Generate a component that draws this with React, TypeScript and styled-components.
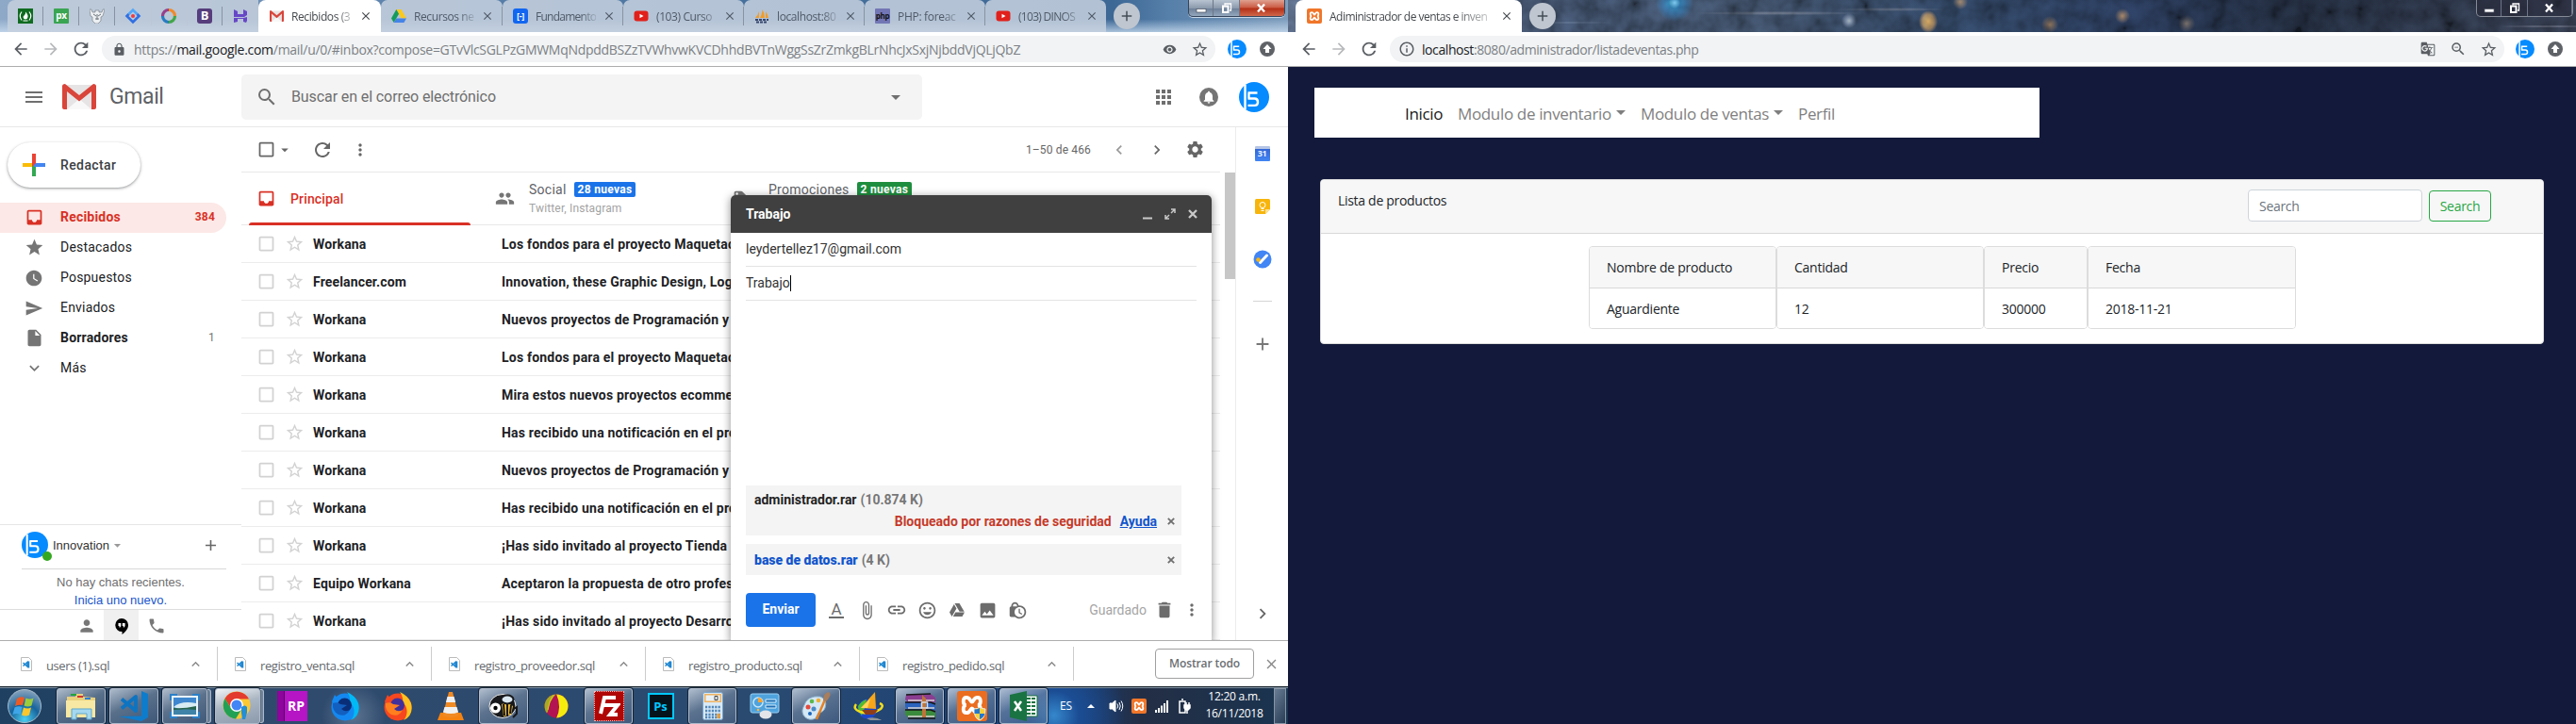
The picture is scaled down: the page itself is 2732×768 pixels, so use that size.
import React from "react";
import styled, { createGlobalStyle, css } from "styled-components";
import {
  MdArrowBack, MdArrowForward, MdRefresh, MdLock, MdInfoOutline, MdStarBorder, MdStar, MdVisibility,
  MdMenu, MdSearch, MdArrowDropDown, MdApps, MdInbox, MdWatchLater, MdSend, MdInsertDriveFile,
  MdExpandMore, MdExpandLess, MdChevronLeft, MdChevronRight, MdSettings, MdMoreVert, MdPeople, MdLocalOffer,
  MdCheckBoxOutlineBlank, MdAttachFile, MdInsertLink, MdInsertEmoticon, MdInsertPhoto, MdDelete,
  MdLockClock, MdPerson, MdPhone, MdAdd, MdClose, MdNotifications, MdGTranslate, MdZoomOut,
} from "react-icons/md";
import { FaGoogleDrive } from "react-icons/fa";

const ui = '"Open Sans", "Noto Sans", sans-serif';
const roboto = 'Roboto, "Liberation Sans", sans-serif';

const Global = createGlobalStyle`
  * { box-sizing: border-box; }
  body { margin: 0; background: #12193a; overflow: hidden; }
  svg { display: block; flex: none; }
`;

const Desktop = styled.div`
  display: flex;
  width: 2732px;
  height: 768px;
  overflow: hidden;
  font-family: ${roboto};
`;
const Monitor = styled.div`
  width: 1366px;
  height: 768px;
  display: flex;
  flex-direction: column;
  flex: none;
  overflow: hidden;
`;
const Slot = styled.div<{ $w: number }>`
  width: ${(p) => p.$w}px;
  flex: none;
  display: flex;
  align-items: center;
  justify-content: center;
`;
const Gap = styled.div<{ $w?: number }>`
  ${(p) => (p.$w === undefined ? "flex: 1;" : `width: ${p.$w}px; flex: none;`)}
`;

/* ---------- browser chrome ---------- */
const Strip = styled.div<{ $stars?: boolean }>`
  position: relative;
  z-index: 0;
  height: 34px;
  flex: none;
  display: flex;
  align-items: flex-start;
  padding-left: 8px;
  ${(p) =>
    p.$stars
      ? css`
          background:
            radial-gradient(circle at 410px 3px, #6fc0ef 0, #2c6c9f 6px, transparent 20px),
            radial-gradient(ellipse 10px 12px at 679px 23px, #d3a05c 0, #8c7255 60%, transparent 100%),
            radial-gradient(circle at 713px 2px, #8a7460 0, transparent 8px),
            radial-gradient(circle at 808px 26px, #7b644f 0, transparent 9px),
            radial-gradient(circle at 885px 17px, #846a52 0, transparent 8px),
            radial-gradient(circle at 953px 25px, #5d5652 0, transparent 9px),
            radial-gradient(circle at 595px 22px, #7c889a 0, transparent 8px),
            radial-gradient(ellipse at 300px 24px, #4d5b70 0, transparent 50px),
            radial-gradient(ellipse at 520px 14px, #5c6473 0, transparent 90px),
            radial-gradient(ellipse at 640px 10px, #4f5868 0, transparent 60px),
            radial-gradient(ellipse at 1340px 28px, #5c5f6e 0, transparent 60px),
            linear-gradient(90deg, #4c5a71 0, #36445a 300px, #344256 500px, #283951 700px, #22304a 900px, #1d2636 1050px, #2c3342 1366px);
        `
      : css`
          background:
            linear-gradient(180deg, transparent 60%, rgba(206, 224, 242, 0.75) 100%),
            linear-gradient(90deg, #8ea9c8 0, #5f84ad 400px, #46709c 800px, #3d6795 1180px, #567fa9 1240px, #7e9dbd 1366px);
        `}
`;
const NebulaGrain = styled.svg`
  position: absolute;
  inset: 0;
  z-index: -1;
  opacity: 0.4;
  mix-blend-mode: overlay;
`;
const PinnedTab = styled.div<{ $last?: boolean; $first?: boolean }>`
  width: 38px;
  height: 34px;
  flex: none;
  display: flex;
  align-items: center;
  justify-content: center;
  background: rgba(198, 209, 222, 0.84);
  border-radius: ${(p) => (p.$first ? "8px 0 0 0" : "0")};
  &::after {
    content: "";
    width: 1px;
    height: 20px;
    margin: 0 -11px 0 10px;
    background: ${(p) => (p.$last ? "transparent" : "#8793a3")};
  }
`;
const Tab = styled.div<{ $w: number; $active?: boolean; $sep?: boolean; $left?: number }>`
  width: ${(p) => p.$w}px;
  height: 34px;
  flex: none;
  display: flex;
  align-items: center;
  padding-left: ${(p) => p.$left ?? 12}px;
  border-radius: ${(p) => (p.$active ? "8px 8px 0 0" : "7px 7px 0 0")};
  background: ${(p) => (p.$active ? "#fff" : "rgba(198,209,222,0.86)")};
  color: ${(p) => (p.$active ? "#45494d" : "#4f5a68")};
  &::after {
    content: "";
    width: 1px;
    height: 20px;
    margin-left: auto;
    background: ${(p) => (p.$sep ? "#8793a3" : "transparent")};
  }
`;
const TabTitle = styled.div<{ $w: number; $ls?: number }>`
  width: ${(p) => p.$w}px;
  flex: none;
  margin-left: 8px;
  font: 12px ${ui};
  letter-spacing: ${(p) => p.$ls ?? -0.3}px;
  white-space: nowrap;
  mask-image: linear-gradient(90deg, #000 75%, rgba(0, 0, 0, 0.2) 100%);
`;
const NewTab = styled.div`
  width: 28px;
  height: 28px;
  margin: 3px 0 0 8px;
  border-radius: 50%;
  background: #bfc6cf;
  color: #454d57;
  display: flex;
  align-items: center;
  justify-content: center;
`;
const Controls = styled.div<{ $dark?: boolean }>`
  display: flex;
  height: 18px;
  width: 103px;
  border: 1px solid ${(p) => (p.$dark ? "#858a96" : "#35465c")};
  border-top: 0;
  border-radius: 0 0 5px 5px;
  overflow: hidden;
  box-shadow: ${(p) => (p.$dark ? "none" : "0 1px 0 #c6d6e6")};
  background: ${(p) => (p.$dark ? "rgba(40,42,58,.6)" : "linear-gradient(#b9c4d1,#8b9aad 50%,#6c7f97 52%,#93a7bd)")};
`;
const Control = styled.div<{ $w: number; $close?: boolean }>`
  width: ${(p) => p.$w}px;
  display: flex;
  align-items: center;
  justify-content: center;
  border-right: 1px solid #6c7688;
  ${(p) => p.$close && "border-right: 0; background: linear-gradient(#dfa08f,#ca5a43 48%,#b32f16 52%,#d0674a);"}
`;
const Bar = styled.div`
  height: 37px;
  flex: none;
  display: flex;
  align-items: center;
  background: #fff;
  border-bottom: 1px solid #adadad;
  color: #5a5e63;
`;
const Omnibox = styled.div<{ $w: number }>`
  width: ${(p) => p.$w}px;
  height: 28px;
  border-radius: 14px;
  background: #f1f3f4;
  display: flex;
  align-items: center;
  flex: none;
`;
const Url = styled.div<{ $ls: number }>`
  font: 14px ${ui};
  letter-spacing: ${(p) => p.$ls}px;
  color: #7c8085;
  white-space: nowrap;
  b { font-weight: 400; color: #202124; }
`;
const UpdateDot = styled.div`
  width: 16px;
  height: 16px;
  border-radius: 50%;
  background: #5f6368;
  display: flex;
  align-items: center;
  justify-content: center;
`;

const Cross = ({ size, color }: { size: number; color: string }) => (
  <svg width={size} height={size} viewBox="0 0 10 10"><path d="M1 1l8 8M9 1L1 9" stroke={color} strokeWidth="2.300" /></svg>
);
const Avatar = ({ size }: { size: number }) => (
  <svg width={size} height={size} viewBox="0 0 32 32">
    <circle cx="16" cy="16" r="16" fill="#068bff" />
    <path d="M6.500 3v26" stroke="#fff" strokeWidth="2.400" />
    <path d="M9.500 11.500h10M9.500 17.500h7q3.500 0 3.500 3.700t-3.500 3.700h-7M10.500 11.500v6" stroke="#fff" strokeWidth="2.400" fill="none" />
  </svg>
);
const WinControls = ({ dark }: { dark?: boolean }) => (
  <Controls $dark={dark}>
    <Control $w={27}>
      <svg width="12" height="14"><rect x="1" y="7.500" width="10" height="3.500" fill="#fff" stroke="#4a5260" strokeWidth=".7" /></svg>
    </Control>
    <Control $w={28}>
      <svg width="12" height="12"><path d="M4 2.500V1h6.500v7H9" fill="none" stroke="#fff" strokeWidth="1.300" /><path d="M2 3.500h5.500v6.500H2z" fill="none" stroke="#fff" strokeWidth="2" /></svg>
    </Control>
    <Control $w={48} $close={!dark}>
      <svg width="12" height="12"><path d="M2 1.500l7 8M9 1.500l-7 8" stroke="#fff" strokeWidth="2.300" /></svg>
    </Control>
  </Controls>
);

/* ---------- favicons and logos ---------- */
const GlyphTile = styled.div<{ $bg: string; $fg: string; $fs: number; $r?: number }>`
  width: 16px;
  height: 16px;
  flex: none;
  border-radius: ${(p) => p.$r ?? 1}px;
  background: ${(p) => p.$bg};
  color: ${(p) => p.$fg};
  font: 700 ${(p) => p.$fs}px/15px ${ui};
  letter-spacing: -0.3px;
  text-align: center;
`;
const GmailMark = ({ w, h }: { w: number; h: number }) => (
  <svg width={w} height={h} viewBox="0 0 36 27" preserveAspectRatio="none">
    <rect x="1" y="1" width="34" height="26" rx="2" fill="#e6e4e4" />
    <path d="M5 27L18 16l13 11z" fill="#fff" opacity=".75" />
    <path d="M0 2.500Q0 0 3 0l15 12L33 0q3 0 3 2.500V25q0 2-2 2h-3V8L18 18.500 5 8v19H2q-2 0-2-2z" fill="#d9453a" />
  </svg>
);
const Drive = () => (
  <svg width="16" height="16" viewBox="0 0 16 16">
    <path d="M5.300 1h5.300L16 10.500h-5.300z" fill="#fbc91b" /><path d="M5.300 1L8 5.700 2.700 15 0 10.500z" fill="#159b5b" /><path d="M5.400 10.500H16L13.400 15H2.700z" fill="#4483e8" />
  </svg>
);
const YouTube = () => (
  <svg width="16" height="16" viewBox="0 0 16 16"><rect x="0.500" y="2.500" width="15" height="11" rx="3" fill="#e1201b" /><path d="M6.500 5.700v4.600L10.500 8z" fill="#fff" /></svg>
);
const XamppShape = "M5.200 4.200c2 0 2 2.300 2.800 2.300s.8-2.300 2.800-2.300 2 3.600.2 3.900c1.800.3 1.800 3.900-.2 3.900s-2-2.300-2.800-2.300-.8 2.300-2.800 2.300-2-3.600-.2-3.900c-1.800-.3-1.800-3.900.2-3.900z";
const Xampp = ({ size = 16 }: { size?: number }) => (
  <svg width={size} height={size} viewBox="0 0 16 16"><rect width="16" height="16" rx="2" fill="#f0762a" /><path d={XamppShape} fill="none" stroke="#fff" strokeWidth="1.800" /></svg>
);

/* ---------- gmail ---------- */
const Mail = styled.div`
  height: 608px;
  flex: none;
  background: #fff;
  display: flex;
  flex-direction: column;
  position: relative;
  color: #6f6f6f;
`;
const Header = styled.div`
  height: 64px;
  flex: none;
  display: flex;
  align-items: center;
  border-bottom: 1px solid #e8e8e8;
`;
const Brand = styled.div`
  width: 140px;
  padding-left: 14px;
  font: 23px/26px ${roboto};
  letter-spacing: -0.4px;
  color: #5f6368;
`;
const SearchBox = styled.div`
  width: 722px;
  height: 48px;
  border-radius: 5px;
  background: #f4f4f4;
  display: flex;
  align-items: center;
  font-size: 16px;
  letter-spacing: -0.1px;
`;
const Bell = styled.div`
  width: 20px;
  height: 20px;
  border-radius: 50%;
  background: #757575;
  color: #fff;
  display: flex;
  align-items: center;
  justify-content: center;
`;
const Columns = styled.div`
  height: 544px;
  display: flex;
`;
const Sidebar = styled.div`
  width: 256px;
  flex: none;
  display: flex;
  flex-direction: column;
`;
const Compose = styled.div`
  width: 141px;
  height: 48px;
  margin: 16px 0 16px 8px;
  border-radius: 24px;
  box-shadow: 0 1px 2px rgba(60, 64, 67, 0.35), 0 1px 3px 1px rgba(60, 64, 67, 0.16);
  display: flex;
  align-items: center;
  padding-left: 16px;
  font-size: 14px;
  font-weight: 500;
  color: #3c4043;
  gap: 16px;
  letter-spacing: 0.4px;
`;
const NavItem = styled.div<{ $on?: boolean; $bold?: boolean }>`
  width: 240px;
  height: 32px;
  flex: none;
  border-radius: 0 16px 16px 0;
  display: flex;
  align-items: center;
  padding: 0 12px 2px 26px;
  font-size: 14px;
  letter-spacing: 0.2px;
  font-weight: ${(p) => (p.$on || p.$bold ? 700 : 400)};
  color: ${(p) => (p.$on ? "#d93025" : "#202124")};
  background: ${(p) => (p.$on ? "#fce8e6" : "transparent")};
  svg { color: ${(p) => (p.$on ? "#d93025" : "#757575")}; margin-top: 1px; }
`;
const NavText = styled.span`
  flex: 1;
  margin-left: 17px;
`;
const Count = styled.span<{ $on?: boolean }>`
  font-size: 12px;
  font-weight: ${(p) => (p.$on ? 700 : 400)};
  color: ${(p) => (p.$on ? "#d93025" : "#777")};
`;
const Chat = styled.div`
  height: 123px;
  margin-top: auto;
  border-top: 1px solid #e6e6e6;
  font: 13px "Liberation Sans", Arial, sans-serif;
  display: flex;
  flex-direction: column;
`;
const ChatHead = styled.div`
  height: 48px;
  margin: 0 16px 0 23px;
  border-bottom: 1px solid #d8d8d8;
  display: flex;
  align-items: center;
  color: #333;
  padding-bottom: 4px;
`;
const Presence = styled.div`
  position: relative;
  margin-right: 5px;
  &::after {
    content: "";
    position: absolute;
    right: -4px;
    bottom: -3px;
    width: 10px;
    height: 10px;
    border-radius: 50%;
    background: #34a821;
  }
`;
const ChatText = styled.div`
  height: 42px;
  padding-top: 4px;
  text-align: center;
  line-height: 19px;
  a { color: #1a56cc; }
`;
const ChatTabs = styled.div`
  height: 33px;
  border-top: 1px solid #ddd;
  display: flex;
  padding-left: 73px;
  color: #777;
`;
const ChatTab = styled.div<{ $on?: boolean }>`
  width: 37px;
  display: flex;
  align-items: center;
  justify-content: center;
  padding-top: 2px;
  background: ${(p) => (p.$on ? "#f0f0f0" : "transparent")};
`;
const List = styled.div`
  width: 1038px;
  flex: none;
`;
const ListTools = styled.div`
  height: 48px;
  display: flex;
  align-items: center;
  border-bottom: 1px solid #e8e8e8;
  padding-left: 14px;
  font-size: 12px;
  letter-spacing: 0.15px;
  color: #666;
`;
const Categories = styled.div`
  height: 56px;
  display: flex;
  border-bottom: 1px solid #e8e8e8;
`;
const Category = styled.div<{ $w: number; $left: number; $on?: boolean }>`
  width: ${(p) => p.$w}px;
  margin-left: ${(p) => p.$left}px;
  display: flex;
  align-items: center;
  font-size: 14px;
  font-weight: ${(p) => (p.$on ? 500 : 400)};
  color: ${(p) => (p.$on ? "#d93025" : "#5f6368")};
  ${(p) =>
    p.$on &&
    css`
      flex-wrap: wrap;
      &::after {
        content: "";
        width: 235px;
        height: 3px;
        background: #d93025;
        border-radius: 3px 3px 0 0;
        align-self: flex-end;
      }
    `}
`;
const CategoryLine = styled.div<{ $on?: boolean }>`
  height: ${(p) => (p.$on ? 53 : 56)}px;
  display: flex;
  align-items: center;
  width: 100%;
  padding-top: ${(p) => (p.$on ? 2 : 0)}px;
  padding-left: ${(p) => (p.$on ? 8 : 0)}px;
`;
const CategoryBody = styled.div`
  margin-left: 15px;
  letter-spacing: 0.15px;
`;
const CategoryTop = styled.div`
  display: flex;
  align-items: center;
  gap: 8px;
  height: 16px;
  margin-bottom: 5px;
  letter-spacing: 0.25px;
`;
const CategorySub = styled.div`
  font-size: 12px;
  line-height: 14px;
  color: #a3a3a3;
  height: 14px;
`;
const Badge = styled.span<{ $bg: string }>`
  height: 16px;
  padding: 0 4px;
  border-radius: 2px;
  background: ${(p) => p.$bg};
  color: #fff;
  font: 700 12px/16px ${roboto};
  letter-spacing: 0.3px;
`;
const Row = styled.div`
  height: 40px;
  display: flex;
  align-items: center;
  border-bottom: 1px solid #ececec;
  padding-left: 15px;
  color: #202124;
  font-size: 14px;
  font-weight: 700;
  white-space: nowrap;
  overflow: hidden;
`;
const Sender = styled.div`
  width: 200px;
  margin-left: 9px;
  letter-spacing: 0.15px;
`;
const Subject = styled.div`
  letter-spacing: 0.2px;
`;
const BoxMark = styled.div`
  width: 22px;
  display: flex;
  justify-content: center;
  color: #d2d2d2;
`;
const Rows = styled.div`
  height: 440px;
  overflow: hidden;
`;
const ScrollTrack = styled.div`
  width: 17px;
  flex: none;
  padding: 48px 0 0 5px;
  border-right: 1px solid #ececec;
`;
const Thumb = styled.div`
  height: 113px;
  background: #c7c7c7;
`;
const SidePanel = styled.div`
  width: 55px;
  display: flex;
  flex-direction: column;
  align-items: center;
  padding-top: 20px;
`;
const SideIcon = styled.div`
  height: 16px;
  margin-bottom: 40px;
  display: flex;
  align-items: center;
`;
const SideRule = styled.div`
  width: 20px;
  height: 1px;
  background: #d5d5d5;
  margin-bottom: 34px;
  margin-top: -4px;
`;

const Draft = styled.div`
  position: absolute;
  left: 775px;
  top: 136px;
  width: 510px;
  height: 472px;
  background: #fff;
  border-radius: 5px 5px 0 0;
  box-shadow: 0 2px 9px 1px rgba(0, 0, 0, 0.38);
  clip-path: inset(-12px -12px 0 -12px);
  display: flex;
  flex-direction: column;
  font-size: 14px;
  color: #333;
`;
const DraftHead = styled.div`
  height: 40px;
  background: #404040;
  color: #fff;
  border-radius: 5px 5px 0 0;
  font-weight: 700;
  display: flex;
  align-items: center;
  padding: 0 8px 1px 16px;
`;
const Field = styled.div`
  height: 36px;
  margin: 0 16px;
  padding-bottom: 1px;
  border-bottom: 1px solid #e4e4e4;
  display: flex;
  align-items: center;
`;
const Caret = styled.span`
  width: 1px;
  height: 17px;
  background: #000;
`;
const Files = styled.div`
  margin: 196px 32px 0 16px;
  display: flex;
  flex-direction: column;
  gap: 9px;
  font-weight: 700;
`;
const FileBox = styled.div<{ $h: number }>`
  height: ${(p) => p.$h}px;
  background: #f4f4f4;
  padding: 0 5px 0 9px;
  display: flex;
  flex-direction: column;
  justify-content: center;
  gap: 1px;
`;
const FileLine = styled.div<{ $end?: boolean }>`
  height: 22px;
  display: flex;
  align-items: center;
  justify-content: ${(p) => (p.$end ? "flex-end" : "flex-start")};
  color: #222;
  i { font-style: normal; color: #777; margin-left: 4px; }
  em { font-style: normal; color: #c53929; }
  a { color: #1155cc; text-decoration: underline; margin: 0 11px 0 9px; }
  strong { color: #1155cc; }
  svg { margin-right: 2px; }
`;
const DraftTools = styled.div`
  height: 36px;
  margin: 19px 8px 0 16px;
  display: flex;
  align-items: center;
  color: #6c6c6c;
`;
const Send = styled.div`
  width: 74px;
  height: 36px;
  border-radius: 4px;
  background: #1a73e8;
  color: #fff;
  font-weight: 700;
  line-height: 35px;
  text-align: center;
  margin-right: 6px;
`;
const Saved = styled.span`
  color: #a5a5a5;
  margin-right: 3px;
`;
const FormatA = styled.span`
  width: 16px;
  height: 17px;
  border-bottom: 2px solid #6c6c6c;
  font: 17px/14px ${roboto};
  text-align: center;
`;

/* ---------- downloads and taskbar ---------- */
const Shelf = styled.div`
  height: 49px;
  flex: none;
  background: #fff;
  border-top: 1px solid #adadad;
  display: flex;
  align-items: center;
  font: 13px ${ui};
  color: #666a6e;
`;
const Download = styled.div<{ $w: number }>`
  width: ${(p) => p.$w}px;
  height: 36px;
  border-right: 1px solid #ccc;
  display: flex;
  align-items: center;
  justify-content: space-between;
  padding: 0 14px 0 ${(p) => (p.$w > 228 ? 22 : 18)}px;
`;
const DownloadName = styled.span`
  flex: 1;
  margin: 3px 0 0 15px;
  letter-spacing: -0.4px;
  white-space: nowrap;
`;
const ShowAll = styled.div`
  width: 105px;
  height: 32px;
  border: 1px solid #a0a0a0;
  border-radius: 4px;
  font: 600 12px/29px ${ui};
  letter-spacing: -0.1px;
  text-align: center;
  color: #6a6e73;
  margin-left: auto;
`;
const Taskbar = styled.div`
  height: 40px;
  flex: none;
  display: flex;
  align-items: center;
  border-top: 1px solid #0d1a22;
  box-shadow: inset 0 1px 0 #8494a4;
  background:
    radial-gradient(circle at 1118px 30px, #3587cc 0, #1b4d94 26px, transparent 75px),
    radial-gradient(circle at 375px 30px, #5c7390 0, transparent 34px),
    linear-gradient(90deg, #1f4061 0, #2f4a6c 300px, #2a4a70 800px, #1c4277 1060px, #1b3a68 1150px, #232e45 1210px, #1a3450 1366px);
`;
const Task = styled.div<{ $w: number; $open?: boolean; $bright?: boolean }>`
  width: ${(p) => p.$w}px;
  height: 38px;
  margin-right: 4px;
  flex: none;
  border-radius: 3px;
  display: flex;
  align-items: center;
  justify-content: center;
  ${(p) =>
    p.$open &&
    css`
      border: 1px solid #aebaca;
      box-shadow: 0 0 0 1px rgba(14, 26, 42, 0.8);
      background: ${p.$bright
        ? "linear-gradient(165deg,#f0f3f6,#a9b5c2 45%,#8b9aad)"
        : "linear-gradient(155deg,rgba(220,228,238,.75),rgba(140,155,175,.5) 45%,rgba(90,110,140,.45))"};
    `}
`;
const StackEdge = styled.div`
  width: 4px;
  height: 36px;
  margin: 0 4px 0 -4px;
  flex: none;
  border: 1px solid #aebaca;
  border-left: 0;
  border-radius: 0 3px 3px 0;
  background: rgba(190, 203, 218, 0.45);
`;
const AppTile = styled.div<{ $size: number; $bg: string; $fg: string; $fs: number; $edge?: string }>`
  width: ${(p) => p.$size}px;
  height: ${(p) => p.$size}px;
  background: ${(p) => p.$bg};
  border: ${(p) => p.$edge ?? "0"};
  color: ${(p) => p.$fg};
  font: 700 ${(p) => p.$fs}px ${ui};
  display: flex;
  align-items: center;
  justify-content: center;
`;
const Tray = styled.div`
  flex: 1;
  display: flex;
  align-items: center;
  color: #fff;
  font: 12px ${ui};
  letter-spacing: -0.25px;
`;
const Clock = styled.div`
  width: 84px;
  text-align: center;
  font-size: 12px;
  line-height: 17.500px;
  letter-spacing: -0.25px;
  padding-bottom: 2px;
`;
const ShowDesktop = styled.div`
  width: 13px;
  height: 38px;
  border: 1px solid #8795a6;
  background: linear-gradient(120deg, rgba(200, 215, 230, 0.45), rgba(60, 75, 95, 0.4));
`;

/* ---------- sales page ---------- */
const Page = styled.div`
  flex: 1;
  background: #12193a;
  padding: 22px 34px 0 28px;
  font-family: ${ui};
`;
const NavBar = styled.div`
  width: 769px;
  height: 53px;
  background: #fff;
  display: flex;
  align-items: center;
  padding: 2px 0 0 96px;
  font-size: 17px;
  letter-spacing: -0.35px;
`;
const NavLink = styled.div<{ $w: number; $on?: boolean; $menu?: boolean }>`
  width: ${(p) => p.$w}px;
  display: flex;
  align-items: center;
  white-space: nowrap;
  color: ${(p) => (p.$on ? "#191919" : "#7f7f7f")};
  ${(p) =>
    p.$menu &&
    css`
      &::after {
        content: "";
        margin: -2px 0 0 5px;
        border: 5px solid transparent;
        border-top-color: #7f7f7f;
        border-bottom: 0;
      }
    `}
`;
const Card = styled.div`
  margin: 44px 0 0 6px;
  width: 1298px;
  height: 175px;
  border: 1px solid #dcdcdc;
  border-radius: 4px;
  background: #fff;
  overflow: hidden;
  color: #212529;
  font-size: 14px;
`;
const CardHead = styled.div`
  height: 57px;
  background: #f7f7f7;
  border-bottom: 1px solid #d8d8d8;
  display: flex;
  align-items: flex-start;
  padding: 10px 55px 0 18px;
  letter-spacing: -0.3px;
`;
const CardTitle = styled.div`
  flex: 1;
  padding-top: 2px;
`;
const SearchInput = styled.div`
  width: 185px;
  height: 34px;
  border: 1px solid #ced4da;
  border-radius: 4px;
  background: #fff;
  color: #6c757d;
  line-height: 33px;
  padding-left: 11px;
`;
const SearchButton = styled.div`
  width: 66px;
  height: 33px;
  margin: 1px 0 0 7px;
  border: 1px solid #28a745;
  border-radius: 4px;
  color: #28a745;
  line-height: 32px;
  text-align: center;
`;
const TableRow = styled.div`
  display: flex;
  margin: 13px 0 0 284px;
`;
const Column = styled.div<{ $w: number }>`
  width: ${(p) => p.$w}px;
  height: 88px;
  border: 1px solid #dcdcdc;
  border-radius: 4px;
  overflow: hidden;
`;
const Cell = styled.div<{ $head?: boolean }>`
  height: 44px;
  line-height: 44px;
  padding-left: 18px;
  letter-spacing: -0.25px;
  background: ${(p) => (p.$head ? "#f7f7f7" : "#fff")};
  border-bottom: ${(p) => (p.$head ? "1px solid #d8d8d8" : "0")};
`;

const mails: [string, string][] = [
  ["Workana", "Los fondos para el proyecto Maquetación"],
  ["Freelancer.com", "Innovation, these Graphic Design, Logo"],
  ["Workana", "Nuevos proyectos de Programación y"],
  ["Workana", "Los fondos para el proyecto Maquetación"],
  ["Workana", "Mira estos nuevos proyectos ecommerce"],
  ["Workana", "Has recibido una notificación en el proyecto"],
  ["Workana", "Nuevos proyectos de Programación y"],
  ["Workana", "Has recibido una notificación en el proyecto"],
  ["Workana", "¡Has sido invitado al proyecto Tienda"],
  ["Equipo Workana", "Aceptaron la propuesta de otro profesional"],
  ["Workana", "¡Has sido invitado al proyecto Desarrollo"],
];
const downloads = ["users (1).sql", "registro_venta.sql", "registro_proveedor.sql", "registro_producto.sql", "registro_pedido.sql"];
const columns: [number, string, string][] = [
  [199, "Nombre de producto", "Aguardiente"],
  [220, "Cantidad", "12"],
  [110, "Precio", "300000"],
  [221, "Fecha", "2018-11-21"],
];
const tabs: [React.ReactNode, string, number][] = [
  [<Drive />, "Recursos ne", -0.4],
  [<GlyphTile $bg="#1266f1" $fg="#fff" $fs={9} $r={3}>[-]</GlyphTile>, "Fundamento", -0.75],
  [<YouTube />, "(103) Curso", -0.4],
  [<svg width="16" height="16" viewBox="0 0 16 16"><path d="M1 10q3-3 4-7v7zM6 10q2-3 2.500-9Q11 5 11 10zM12 10V3q2 3 3 7z" fill="#f39c26" /><path d="M1 12h14M2 14.500h12" stroke="#35476d" strokeWidth="1.800" strokeDasharray="3 1" /></svg>, "localhost:80", -0.4],
  [<GlyphTile $bg="#7376b5" $fg="#111" $fs={8}>php</GlyphTile>, "PHP: foreac", -0.3],
  [<YouTube />, "(103) DINOS", -0.7],
];
const Ring = () => (
  <svg width="18" height="18" viewBox="0 0 18 18" fill="none" strokeWidth="3.200">
    <path d="M9 2.500A6.500 6.500 0 0 1 15.500 9" stroke="#ef8a2b" /><path d="M15.500 9A6.500 6.500 0 0 1 9 15.500" stroke="#41a648" />
    <path d="M9 15.500A6.500 6.500 0 0 1 2.500 9" stroke="#287cc0" /><path d="M2.500 9A6.500 6.500 0 0 1 9 2.500" stroke="#963f8c" />
  </svg>
);
const pinned: React.ReactNode[] = [
  <svg width="16" height="16" viewBox="0 0 16 16"><rect width="16" height="16" fill="#0f6b1f" /><path d="M4 3.500q-3.500 4.500 0 9M12 3.500q3.500 4.500 0 9" fill="none" stroke="#fff" strokeWidth="1.200" /><path d="M8 3.500q3 3 2.500 5.500Q10 11.500 8 11.500T5.500 9Q6 8 7 7q1.500-1.500 1-3.500zM5.500 12.500h5v1h-5z" fill="#fff" /></svg>,
  <GlyphTile $bg="#3aa552" $fg="#fff" $fs={10}>px</GlyphTile>,
  <svg width="16" height="16" viewBox="0 0 16 16"><path d="M0 1h2l1 3h3V2h4v2h3l1-3h2l-2 7-2 1v4l-3 3H6l-3-3V9L1 8z" fill="#eceff1" stroke="#7b828b" strokeWidth=".7" /><path d="M4 6l3 2M12 6L9 8M6 11h4M8 6v6" stroke="#6b727b" /></svg>,
  <svg width="18" height="18" viewBox="0 0 18 18" fill="none"><path d="M4.500 7L9 2.500 13.500 7" stroke="#51a7f9" strokeWidth="2.600" /><path d="M13.500 7l2 2L9 15.500 2.500 9l2-2" stroke="#2f6fe4" strokeWidth="2.600" /><circle cx="9" cy="9" r="2" fill="#ee3c42" /></svg>,
  <Ring />,
  <GlyphTile $bg="#563d7c" $fg="#fff" $fs={13} $r={3}>B</GlyphTile>,
  <svg width="16" height="16" viewBox="0 0 16 16"><path d="M1 1l4 2v3h6V3L11 1l4 2v4l-3 2H1zM1 15V10h10l4-1v4l-1 2-3-1v-3H5v3z" fill="#6747c7" /></svg>,
];
const Sky = () => (
  <svg width="32" height="26" viewBox="0 0 32 26"><rect x="3" y="3" width="26" height="20" fill="#3e87cf" stroke="#e8f2fa" strokeWidth="2" /><path d="M4 14q8-7 24-4v4q-12 5-24 0z" fill="#d7ebf3" /><path d="M4 15q10 1 24-2v4q-12-1-24 1z" fill="#27644d" /><path d="M4 17q12-1 24 0v5H4z" fill="#3f83a8" /><path d="M1 7V1h7M24 1h7v6M31 19v6h-7M8 25H1v-6" fill="none" stroke="#2b80c8" strokeWidth="2" /></svg>
);
const Firefox = ({ a, b, c, d }: { a: string; b: string; c: string; d: string }) => (
  <svg width="32" height="32" viewBox="0 0 32 32"><circle cx="16" cy="17" r="14.500" fill={a} /><path d="M18 1q9 4 12 12 3 13-8 18 5-6 3-13-1-4-4-5 1-7-3-12z" fill={b} /><path d="M2 11l3-7 4 5 6-2-3 6-6 4z" fill={a} /><circle cx="15.500" cy="15" r="7.500" fill={c} /><path d="M3 13q5-2 8 1l7 1-6 4q4 4 9 1-4 8-12 5-7-4-6-12z" fill={d} /></svg>
);

const BrowserBar = ({ offset, secure, width, children, url, end }: { offset: number; secure?: boolean; width: number; children: React.ReactNode; url: React.ReactNode; end: number }) => (
  <Bar>
    <Gap $w={offset} />
    <Slot $w={32}><MdArrowBack size={20} /></Slot>
    <Slot $w={32}><MdArrowForward size={20} color="#b7b9bb" /></Slot>
    <Slot $w={32}><MdRefresh size={22} /></Slot>
    <Gap $w={6} />
    <Omnibox $w={width}>
      <Gap $w={10} />
      <Slot $w={16}>{secure ? <MdLock size={15} /> : <MdInfoOutline size={18} />}</Slot>
      <Gap $w={8} />
      {url}
      <Gap />
      {children}
      <Slot $w={32}><MdStarBorder size={19} /></Slot>
      <Gap $w={1} />
    </Omnibox>
    <Gap $w={end} />
    <Avatar size={20} />
    <Gap $w={14} />
    <UpdateDot><svg width="10" height="10"><path d="M5 0l4.500 5H7v4H3V5H.5z" fill="#fff" /></svg></UpdateDot>
  </Bar>
);

export default function App() {
  return (
    <Desktop>
      <Global />
      <Monitor>
        <Strip>
          {pinned.map((icon, i) => <PinnedTab key={i} $first={i === 0} $last={i === 6}>{icon}</PinnedTab>)}
          <Tab $w={130} $active>
            <GmailMark w={15} h={12} />
            <TabTitle $w={65} $ls={-0.4}>Recibidos (3</TabTitle>
            <Gap $w={7} /><MdClose size={14} />
          </Tab>
          {tabs.map(([icon, title, ls], i) => (
            <Tab key={i} $w={i === 0 ? 129 : 128} $sep={i < 5} $left={11}>
              {icon}
              <TabTitle $w={64} $ls={ls}>{title}</TabTitle>
              <Gap $w={7} /><MdClose size={14} />
            </Tab>
          ))}
          <NewTab><MdAdd size={18} /></NewTab>
          <Gap />
          <WinControls /><Gap $w={3} />
        </Strip>
        <BrowserBar offset={6} secure width={1181} end={13} url={
          <Url $ls={-0.29}>https://<b>mail.google.com</b>/mail/u/0/#inbox?compose=GTvVlcSGLPzGMWMqNdpddBSZzTVWhvwKVCDhhdBVTnWggSsZrZmkgBLrNhcJxSxjNjbddVjQLjQbZ</Url>
        }>
          <Slot $w={32}><MdVisibility size={15} /></Slot>
        </BrowserBar>

        <Mail>
          <Header>
            <Gap $w={24} /><MdMenu size={24} /><Gap $w={18} />
            <GmailMark w={36} h={27} />
            <Brand>Gmail</Brand>
            <Gap $w={14} />
            <SearchBox>
              <Slot $w={53}><MdSearch size={24} /></Slot>
              <span>Buscar en el correo electrónico</span>
              <Gap /><MdArrowDropDown size={24} /><Gap $w={16} />
            </SearchBox>
            <Gap $w={244} /><MdApps size={24} /><Gap $w={26} />
            <Bell><MdNotifications size={16} /></Bell>
            <Gap $w={22} /><Avatar size={32} />
          </Header>
          <Columns>
            <Sidebar>
              <Compose>
                <svg width="24" height="24"><path d="M12 0v12" stroke="#ea4335" strokeWidth="4" /><path d="M12 12v12" stroke="#34a853" strokeWidth="4" /><path d="M0 12h10" stroke="#fbbc04" strokeWidth="4" /><path d="M12 12h12" stroke="#4285f4" strokeWidth="4" /><path d="M10 14V10h4z" fill="#ea4335" /></svg>
                Redactar
              </Compose>
              <NavItem $on><MdInbox size={21} /><NavText>Recibidos</NavText><Count $on>384</Count></NavItem>
              <NavItem><MdStar size={21} /><NavText>Destacados</NavText></NavItem>
              <NavItem><MdWatchLater size={20} /><Gap $w={1} /><NavText>Pospuestos</NavText></NavItem>
              <NavItem><MdSend size={20} /><Gap $w={1} /><NavText>Enviados</NavText></NavItem>
              <NavItem $bold><MdInsertDriveFile size={21} /><NavText>Borradores</NavText><Count>1</Count></NavItem>
              <NavItem><MdExpandMore size={21} /><NavText>Más</NavText></NavItem>
              <Chat>
                <ChatHead>
                  <Presence><Avatar size={28} /></Presence>
                  Innovation<MdArrowDropDown size={17} color="#999" />
                  <Gap /><MdAdd size={19} color="#666" /><Gap $w={7} />
                </ChatHead>
                <ChatText>No hay chats recientes.<br /><a>Inicia uno nuevo.</a></ChatText>
                <ChatTabs>
                  <ChatTab><MdPerson size={20} /></ChatTab>
                  <ChatTab $on><svg width="14" height="17" viewBox="0 0 14 17"><path d="M7 0a7 7 0 0 1 7 7c0 4-3 7.500-6.500 10v-3A7 7 0 1 1 7 0z" fill="#000" /><path d="M3.500 5h2.800v3l-1 1.500H4.500V8h-1zM7.800 5h2.800v3l-1 1.500h-.8V8h-1z" fill="#fff" /></svg></ChatTab>
                  <ChatTab><MdPhone size={20} /></ChatTab>
                </ChatTabs>
              </Chat>
            </Sidebar>
            <List>
              <ListTools>
                <Slot $w={24}><MdCheckBoxOutlineBlank size={21} /></Slot>
                <Slot $w={16}><MdArrowDropDown size={18} /></Slot>
                <Gap $w={20} /><MdRefresh size={24} /><Gap $w={18} /><MdMoreVert size={20} />
                <Gap />1–50 de 466<Gap $w={20} />
                <MdChevronLeft size={20} color="#999" /><Gap $w={20} /><MdChevronRight size={20} /><Gap $w={20} /><MdSettings size={21} /><Gap $w={16} />
              </ListTools>
              <Categories>
                <Category $w={235} $left={8} $on>
                  <CategoryLine $on><MdInbox size={21} /><CategoryBody>Principal</CategoryBody></CategoryLine>
                </Category>
                <Category $w={240} $left={26}>
                  <CategoryLine><MdPeople size={21} color="#757575" /><CategoryBody>
                    <CategoryTop>Social<Badge $bg="#1a73e8">28 nuevas</Badge></CategoryTop>
                    <CategorySub>Twitter, Instagram</CategorySub>
                  </CategoryBody></CategoryLine>
                </Category>
                <Category $w={240} $left={12}>
                  <CategoryLine><MdLocalOffer size={20} color="#757575" /><Gap $w={3} /><CategoryBody>
                    <CategoryTop>Promociones<Badge $bg="#1e8e3e">2 nuevas</Badge></CategoryTop>
                    <CategorySub />
                  </CategoryBody></CategoryLine>
                </Category>
              </Categories>
              <Rows>
                {mails.map(([from, subject], i) => (
                  <Row key={i}>
                    <BoxMark><MdCheckBoxOutlineBlank size={21} /></BoxMark>
                    <Gap $w={8} />
                    <BoxMark><MdStarBorder size={21} /></BoxMark>
                    <Sender>{from}</Sender>
                    <Subject>{subject}</Subject>
                  </Row>
                ))}
              </Rows>
            </List>
            <ScrollTrack><Thumb /></ScrollTrack>
            <SidePanel>
              <SideIcon><GlyphTile $bg="linear-gradient(#b5c5e6 0,#b5c5e6 3px,#3367d6 3px,#4285f4)" $fg="#e8f0fe" $fs={9}>31</GlyphTile></SideIcon>
              <SideIcon><svg width="16" height="16"><path d="M1.500 0h13Q16 0 16 1.500V11l-5 5H1.500Q0 16 0 14.500v-13Q0 0 1.500 0z" fill="#f7b50c" /><path d="M16 11h-5v5z" fill="#fde293" /><circle cx="8" cy="6.500" r="3" fill="none" stroke="#fff" /><path d="M6.500 10.500h3M6.500 12.500h3" stroke="#fff" /></svg></SideIcon>
              <SideIcon><svg width="20" height="20"><circle cx="10" cy="10" r="9.500" fill="#4285f4" /><path d="M7.500 13.500l7-7.500" stroke="#fff" strokeWidth="3" strokeLinecap="round" /><circle cx="5.500" cy="10.500" r="2.300" fill="#f9b613" /></svg></SideIcon>
              <SideRule />
              <MdAdd size={22} color="#777" />
              <Gap />
              <MdChevronRight size={22} color="#666" />
              <svg width="1" height="17" />
            </SidePanel>
          </Columns>

          <Draft>
            <DraftHead>
              Trabajo<Gap />
              <Slot $w={24}><svg width="10" height="12"><path d="M0 10.500h10" stroke="#c9c9c9" strokeWidth="2" /></svg></Slot>
              <Slot $w={24}><svg width="12" height="12" fill="none" stroke="#c9c9c9" strokeWidth="1.500"><path d="M7 1h4v4M11 1L7 5M1 7v4h4M1 11l4-4" /></svg></Slot>
              <Slot $w={24}><Cross size={10} color="#c9c9c9" /></Slot>
            </DraftHead>
            <Field>leydertellez17@gmail.com</Field>
            <Field>Trabajo<Caret /></Field>
            <Files>
              <FileBox $h={53}>
                <FileLine>administrador.rar <i>(10.874 K)</i></FileLine>
                <FileLine $end><em>Bloqueado por razones de seguridad</em><a>Ayuda</a><Cross size={8} color="#6f6f6f" /></FileLine>
              </FileBox>
              <FileBox $h={33}>
                <FileLine><strong>base de datos.rar</strong> <i>(4 K)</i><Gap /><Cross size={8} color="#6f6f6f" /></FileLine>
              </FileBox>
            </Files>
            <DraftTools>
              <Send>Enviar</Send>
              <Slot $w={32}><FormatA>A</FormatA></Slot>
              <Slot $w={32}><MdAttachFile size={21} /></Slot>
              <Slot $w={32}><MdInsertLink size={22} /></Slot>
              <Slot $w={32}><MdInsertEmoticon size={21} /></Slot>
              <Slot $w={32}><FaGoogleDrive size={16} /></Slot>
              <Slot $w={32}><MdInsertPhoto size={21} /></Slot>
              <Slot $w={32}><MdLockClock size={21} /></Slot>
              <Gap /><Saved>Guardado</Saved>
              <Slot $w={32}><MdDelete size={22} /></Slot>
              <Slot $w={26}><MdMoreVert size={20} /></Slot>
            </DraftTools>
          </Draft>
        </Mail>

        <Shelf>
          {downloads.map((name, i) => (
            <Download key={name} $w={i === 0 ? 231 : 227}>
              <svg width="12" height="15" viewBox="0 0 12 15"><path d="M.5.500h8l3 3v11H.5z" fill="#fff" stroke="#bbb" /><path d="M2.500 6L7 10V5.500L2.500 9.500M8.500 4.500v7" fill="none" stroke="#1f87d2" strokeWidth="1.500" /></svg>
              <DownloadName>{name}</DownloadName>
              <MdExpandLess size={17} color="#888" />
            </Download>
          ))}
          <ShowAll>Mostrar todo</ShowAll>
          <Gap $w={10} /><MdClose size={17} color="#888" /><Gap $w={9} />
        </Shelf>

        <Taskbar>
          <Task $w={52}>
            <svg width="38" height="38" viewBox="0 0 38 38"><defs><radialGradient id="orb" cx=".5" cy=".9" r=".9"><stop offset="0" stopColor="#4bd0f2" /><stop offset=".5" stopColor="#17649c" /><stop offset="1" stopColor="#8ba4bd" /></radialGradient></defs><circle cx="19" cy="19" r="17.500" fill="url(#orb)" stroke="#a6bccb" /><path d="M11 11q4-3 8-1l-2 8q-4-1-8 1z" fill="#ee5a24" /><path d="M20.500 10.500q4 2 8 0l-2 8q-4 2-8 0z" fill="#9ccc3c" /><path d="M8.500 20.500q4-2 8-.5l-2 8q-4-2-8 0z" fill="#3fa7e8" /><path d="M18 20.500q4 2 8 0l-2 8q-4 2-8 0z" fill="#fcc72c" /></svg>
          </Task>
          <Gap $w={4} />
          <Task $w={52} $open><svg width="34" height="30" viewBox="0 0 34 30"><path d="M2 5h9V2h8v3l13 1v20H2z" fill="#e9d07c" /><path d="M6 2h6v2H6z" fill="#20a53a" /><path d="M13 4h6v2h-6z" fill="#d8352b" /><path d="M21 6h6v2h-6z" fill="#2d7fd4" /><path d="M1 9h31v18H1z" fill="#f7e8a4" /><path d="M7 29V18h21v11h-5v-6H12v6z" fill="#a5d8ef" stroke="#5ca6cd" /></svg></Task>
          <Task $w={52} $open><svg width="32" height="32" viewBox="0 0 32 32"><path d="M24 0l7 3v25l-7 4L0 27l24-.5z" fill="#0f7ccb" /><path d="M3 8.500L18 21V6L3 18.500" fill="none" stroke="#0d74c2" strokeWidth="3.800" strokeLinejoin="round" /></svg></Task>
          <Task $w={48} $open><Sky /></Task><StackEdge />
          <Task $w={48} $open $bright>
            <svg width="32" height="32" viewBox="0 0 32 32"><circle cx="15" cy="15" r="14.500" fill="#fcc934" /><path d="M2.500 8A14.500 14.500 0 0 1 28 8.500H15L9 18z" fill="#e33b2e" /><path d="M2.500 8A14.500 14.500 0 0 0 14 29.500L21 18H9z" fill="#22a155" /><circle cx="15" cy="15" r="7" fill="#fff" /><circle cx="15" cy="15" r="5.500" fill="#4285f4" /><path d="M20 17q4-3 6 0v6l-2 7h-3l-1-7z" fill="#258fd4" /></svg>
          </Task><StackEdge />
          <Task $w={52}><AppTile $size={32} $bg="linear-gradient(90deg,#8d059c 0 7px,#5c0468 7px 8px,#b515c4 8px)" $fg="#fff" $fs={14}><Gap $w={8} />RP</AppTile></Task>
          <Task $w={52}><Firefox a="#1488f0" b="#00b9f5" c="#0a2f78" d="#125fc0" /></Task>
          <Task $w={52}><Firefox a="#f6471f" b="#ffc220" c="#42319b" d="#ff7f1e" /></Task>
          <Task $w={52}>
            <svg width="28" height="32" viewBox="0 0 28 32"><path d="M3 23h22l3 8H0z" fill="#f58312" /><path d="M12 1h4l6.500 25q-8 4-17 0z" fill="#f08a24" /><path d="M10.500 6h7l1.700 6H8.900zM7.500 17h13l1.600 5.500q-8 3-16.200 0z" fill="#f0f0f0" /></svg>
          </Task>
          <Task $w={52} $open>
            <svg width="32" height="30" viewBox="0 0 32 30"><ellipse cx="15" cy="15" rx="14" ry="12.500" fill="#17181b" stroke="#eee" /><circle cx="7.500" cy="17" r="5.500" fill="#fff" /><circle cx="7.500" cy="17" r="2.200" /><path d="M14 13q5-3 12 2l-2 9-8 2z" fill="#f1bc33" /><path d="M16 13l1 12M20 13v12M24 14l-1 9" stroke="#17181b" strokeWidth="2" /><ellipse cx="20" cy="8" rx="6.500" ry="4.500" fill="#dbe8f2" stroke="#17181b" strokeWidth="2" /><path d="M27 18l3-2v7l-4 4" stroke="#17181b" strokeWidth="2" fill="none" /></svg>
          </Task>
          <Task $w={52}>
            <svg width="26" height="26" viewBox="0 0 26 26"><defs><clipPath id="ball"><circle cx="13" cy="13" r="12.500" /></clipPath></defs><g clipPath="url(#ball)"><path d="M0 0h26v26H0z" fill="#b41352" /><path d="M0 0h13q-8 8-9 19L0 24z" fill="#a9a923" /><path d="M13 0h13v26H13q6-12 0-26z" fill="#f5ec0d" /><path d="M10 1Q5 8 4 17" stroke="#d5cf20" fill="none" /></g></svg>
          </Task>
          <Task $w={51} $open>
            <AppTile $size={32} $bg="#b00606" $fg="#fff" $fs={20} $edge="1px dotted #f6c0c0">
              <svg width="24" height="26" fill="none" stroke="#fff" strokeWidth="4"><path d="M3 21L7 4h12M6 12h8M13 12h8L13 22h8" /></svg>
            </AppTile>
          </Task>
          <Task $w={51}><AppTile $size={28} $bg="#04131c" $fg="#00c8ff" $fs={13} $edge="2px solid #00c8ff">Ps</AppTile></Task>
          <Task $w={51} $open>
            <svg width="22" height="30" viewBox="0 0 22 30"><rect x=".5" y=".5" width="21" height="29" rx="2" fill="#d9e9f6" stroke="#79a3c6" /><rect x="2" y="2" width="18" height="9" fill="#eeb260" /><rect x="3.500" y="3.500" width="15" height="6" fill="#eaf1f4" /><path d="M13 4.500h3v4h-3z" stroke="#444" fill="none" /><path d="M3 16h16M3 20h16M3 24h16M3 27h16" stroke="#5087b8" strokeWidth="2.500" strokeDasharray="2.200 1.200" /><path d="M17 23v5" stroke="#ec9c30" strokeWidth="3" /></svg>
          </Task>
          <Task $w={51}>
            <svg width="32" height="28" viewBox="0 0 32 28"><rect x="1" y="1" width="30" height="20" rx="2" fill="#4fa3dd" stroke="#9cd2f5" /><circle cx="9" cy="10" r="5" fill="none" stroke="#c9e7fb" strokeWidth="1.500" /><path d="M9 10V5a5 5 0 0 1 5 5z" fill="#f6a432" /><path d="M17 7h11v3H17zM17 13h11v3H17z" fill="#1f6fb4" stroke="#d8effc" /><circle cx="9" cy="18" r="1.300" fill="#ffb53b" /><ellipse cx="17" cy="23" rx="6.500" ry="4.500" fill="#e3e5e8" /></svg>
          </Task>
          <Task $w={51} $open>
            <svg width="32" height="32" viewBox="0 0 32 32"><path d="M2 17q4-13 18-11 8 3 5 12-2 5-7 5l-3 6q-6 3-11-1-5-5-2-11z" fill="#d5e8f5" stroke="#87aeca" /><circle cx="7" cy="17" r="2.500" fill="#e54a3c" /><circle cx="11" cy="11" r="2.300" fill="#5bb84b" /><circle cx="18" cy="10" r="2.300" fill="#efaf35" /><circle cx="13" cy="19" r="2.500" fill="#4b8bc6" /><circle cx="9" cy="24" r="2" fill="#1a66bc" /><path d="M16 30L25 9" stroke="#e68222" strokeWidth="2.500" /><path d="M23 10q0-8 6-9 4 3-3 10z" fill="#a87e5d" /></svg>
          </Task>
          <Task $w={51}>
            <svg width="32" height="32" viewBox="0 0 32 32"><circle cx="15" cy="19" r="10.500" fill="#1c46c9" /><path d="M5 16q4-6 9-7l-2 9-3 8q-4-4-4-10z" fill="#4fbc30" /><path d="M3 14q-4 5 4 8 12 4 22-3 4-4-1-6" fill="none" stroke="#f1dd1c" strokeWidth="2.500" /><path d="M23 1l1 18-16-1z" fill="#f8a619" /><path d="M18 8L8 18h7z" fill="#fdd55a" /><path d="M9 20h17l-4 5h-9z" fill="#8d3d1c" /><path d="M14 29q10-2 16 2H18z" fill="#8e949a" /></svg>
          </Task>
          <Task $w={51} $open>
            <svg width="34" height="28" viewBox="0 0 34 28"><path d="M2 2l26-1 5 4v5H4L1 7z" fill="#8b3e91" /><path d="M1 10h27l5 3v5H4l-3-3z" fill="#2b62bd" /><path d="M1 18h27l5 2v6H4l-3-3z" fill="#3a8b3c" /><path d="M4 8h28M4 16h28M4 25h28" stroke="#dad5d5" strokeWidth="1.300" /><path d="M1 10h27l5 2M1 18h27l5 2M2 2l26-1M4 27h29" stroke="#161616" strokeWidth="1.500" fill="none" /><path d="M19 2l4 4v20h-4z" fill="#bd743a" /><path d="M18.500 10h6v6h-6z" fill="none" stroke="#ddd" strokeWidth="1.500" /></svg>
          </Task>
          <Task $w={51} $open>
            <svg width="32" height="32" viewBox="0 0 32 32"><rect width="32" height="32" rx="3" fill="#ea6d20" /><g transform="translate(-1 -2) scale(2.100)"><path d={XamppShape} fill="none" stroke="#fff" strokeWidth="1.800" /></g><path d="M18 19q4 0 6-2 2 2 6 2 0 10-6 12-6-2-6-12z" fill="#f6d23f" stroke="#eee" /><path d="M24 18v6h-5.500v-4.500q3 0 5.500-1.500zM24 24h5.500q-1 4-5.500 6z" fill="#2477cd" /></svg>
          </Task>
          <Task $w={51} $open>
            <svg width="30" height="32" viewBox="0 0 30 32"><path d="M16 5h13v22H16z" fill="#fff" stroke="#187340" /><path d="M18 8h10M18 12h10M18 16h10M18 20h10M18 24h10" stroke="#187340" strokeWidth="2.200" strokeDasharray="4 1" /><path d="M0 4l18-4v32L0 28z" fill="#1a7343" /><path d="M5 11l7 10M12 11L5 21" stroke="#fff" strokeWidth="2.500" /></svg>
          </Task>
          <Tray>
            <Gap $w={9} /><span>ES</span><Gap $w={16} />
            <svg width="8" height="4"><path d="M0 4l4-4 4 4z" fill="#fff" /></svg><Gap $w={15} />
            <svg width="16" height="16" fill="none" stroke="#fff"><path d="M1 5h2.500L7 2v12l-3.500-3H1z" fill="#fff" /><path d="M9 5.500q1.500 2.500 0 5M11 4q2.500 4 0 8M13 2.500q3.500 5.500 0 11" /></svg><Gap $w={8} />
            <Xampp /><Gap $w={9} />
            <svg width="15" height="14" fill="#fff"><path d="M0 11h2v3H0zM3 9h2v5H3zM6 6.500h2V14H6zM9 4h2v10H9zM12 1h2v13h-2z" /></svg><Gap $w={9} />
            <svg width="15" height="16" fill="none" stroke="#fff" strokeWidth="1.500"><path d="M2 3h6v12H2zM4 1h2" /><path d="M7 7h6v3l-2 2H9L7 10z" fill="#fff" /><path d="M9 4v3M12 4v3M10 12v4" /></svg>
            <Gap /><Clock>12:20 a.m.<br />16/11/2018</Clock>
            <ShowDesktop /><Gap $w={2} />
          </Tray>
        </Taskbar>
      </Monitor>

      <Monitor>
        <Strip $stars>
          <NebulaGrain width="1366" height="34">
            <filter id="grain"><feTurbulence type="fractalNoise" baseFrequency="0.045" numOctaves="3" seed="8" /><feColorMatrix values="1.600 0 0 0 -.3  1.600 0 0 0 -.3  1.600 0 0 0 -.3  0 0 0 0 1" /></filter>
            <rect width="1366" height="34" filter="url(#grain)" />
          </NebulaGrain>
          <Tab $w={240} $active>
            <Xampp />
            <TabTitle $w={174} $ls={-0.52}>Adiministrador de ventas e inven</TabTitle>
            <Gap $w={7} /><MdClose size={14} />
          </Tab>
          <NewTab><MdAdd size={18} /></NewTab>
          <Gap />
          <WinControls dark /><Gap $w={3} />
        </Strip>
        <BrowserBar offset={6} width={1182} end={12} url={<Url $ls={-0.42}><b>localhost</b>:8080/administrador/listadeventas.php</Url>}>
          <Slot $w={32}><MdGTranslate size={16} /></Slot>
          <Slot $w={32}><MdZoomOut size={18} /></Slot>
        </BrowserBar>
        <Page>
          <NavBar>
            <NavLink $w={56} $on>Inicio</NavLink>
            <NavLink $w={194} $menu>Modulo de inventario</NavLink>
            <NavLink $w={167} $menu>Modulo de ventas</NavLink>
            <NavLink $w={60}>Perfil</NavLink>
          </NavBar>
          <Card>
            <CardHead>
              <CardTitle>Lista de productos</CardTitle>
              <SearchInput>Search</SearchInput>
              <SearchButton>Search</SearchButton>
            </CardHead>
            <TableRow>
              {columns.map(([w, head, value]) => (
                <Column key={head} $w={w}><Cell $head>{head}</Cell><Cell>{value}</Cell></Column>
              ))}
            </TableRow>
          </Card>
        </Page>
      </Monitor>
    </Desktop>
  );
}
